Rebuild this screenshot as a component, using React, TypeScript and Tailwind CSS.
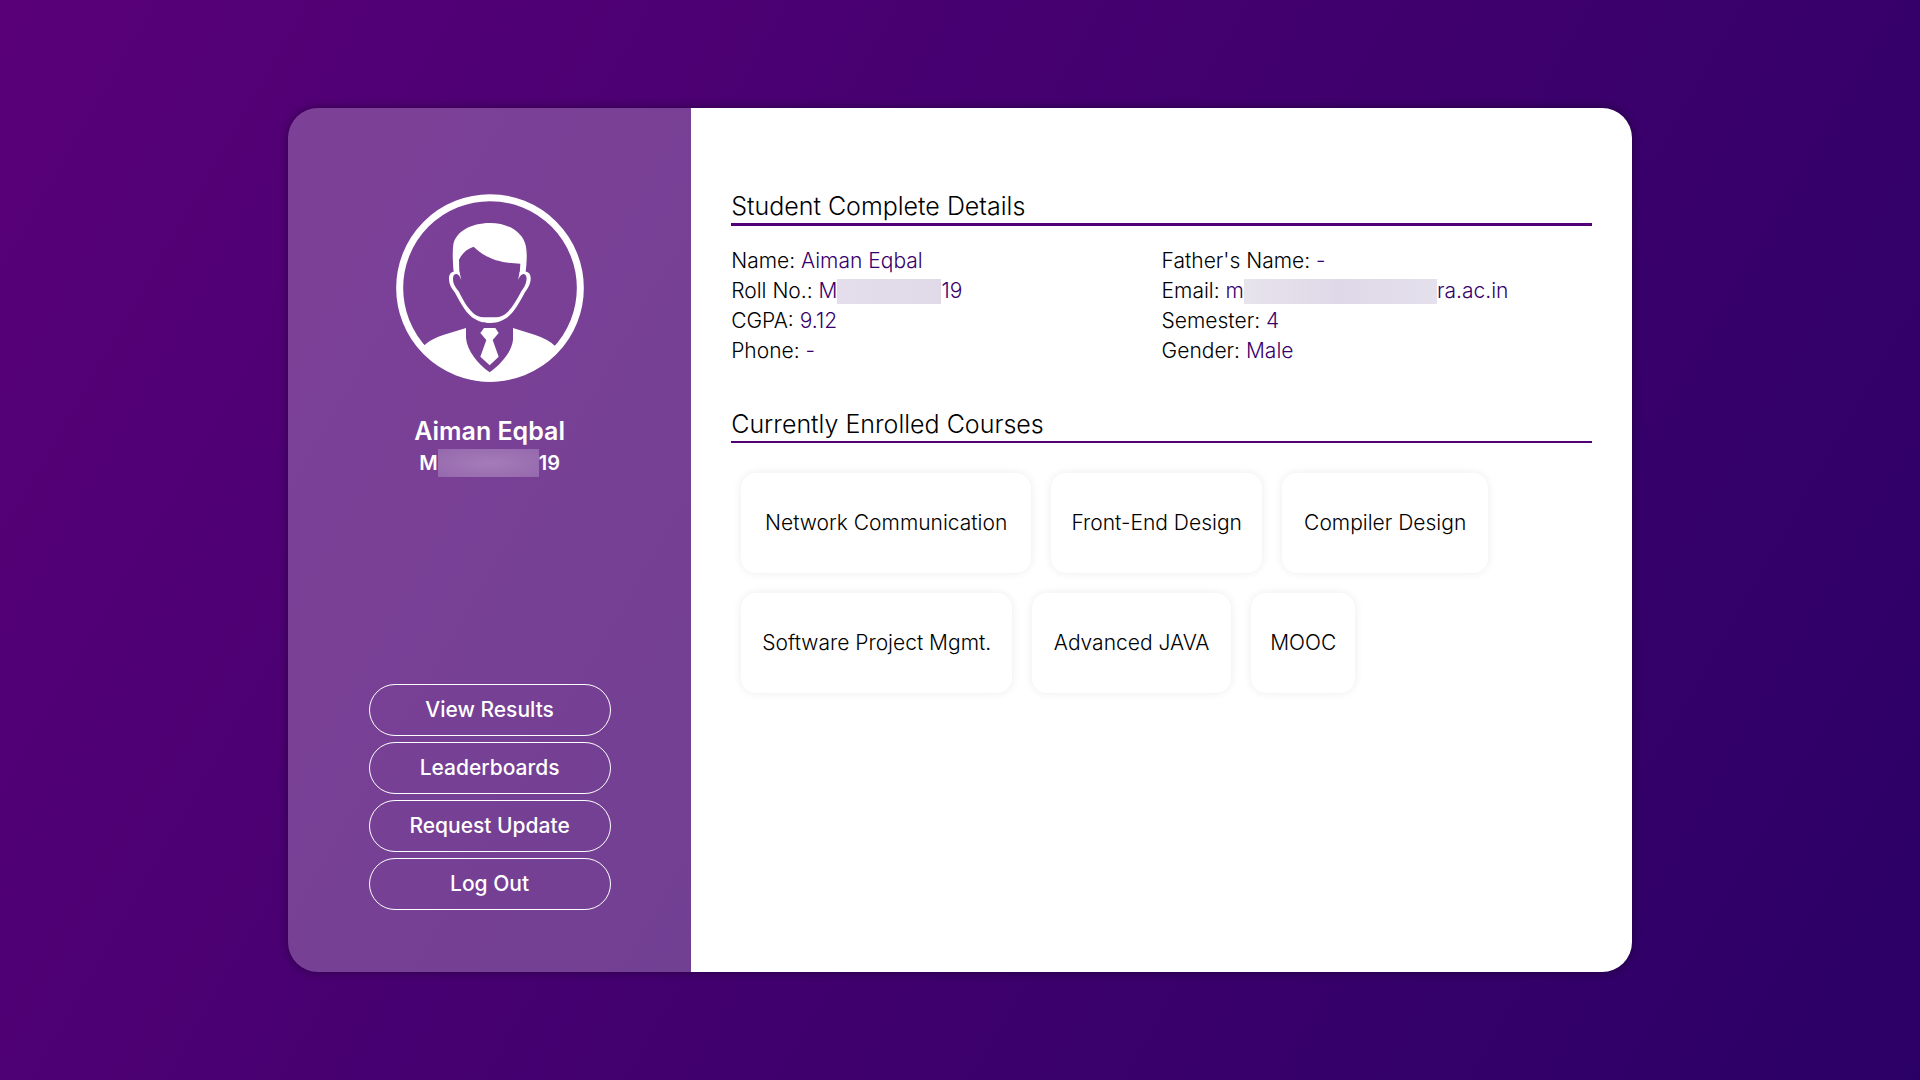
import type { ReactNode } from "react";

const actions = ["View Results", "Leaderboards", "Request Update", "Log Out"];

const courses = [
  { title: "Network Communication", width: "min-w-[290px]" },
  { title: "Front-End Design", width: "min-w-[211px]" },
  { title: "Compiler Design", width: "min-w-[206px]" },
  { title: "Software Project Mgmt.", width: "min-w-[271px]" },
  { title: "Advanced JAVA", width: "min-w-[199px]" },
  { title: "MOOC", width: "min-w-[104px]" },
];

function Avatar() {
  return (
    <svg viewBox="48 42 564 564" className="size-[188px]" role="img" aria-label="Student avatar">
      <circle cx="330" cy="324" r="271" fill="none" stroke="#fff" strokeWidth="21" />
      {/* hair */}
      <path
        fill="#fff"
        d="M221 276 C218 245 217 215 220 193 C228 155 272 129 330 129 C386 129 430 157 438 200 C442 225 440 250 437 276 L419 282 L421 251 C370 250 322 240 281 200 C258 207 245 223 237 239 L238 282 Z"
      />
      {/* ears and jaw */}
      <path
        fill="#fff"
        d="M221 275 C211 276 206 286 207 299 C208 312 213 324 225 338 C244 372 258 402 286 418 C302 428 314 429 330 429 C346 429 358 427 373 418 C400 402 417 370 434 338 C446 322 451 312 452 298 C453 284 447 275 436 275 L419 276 L414 300 C418 290 424 282 431 282 C439 283 441 292 439 303 C437 317 430 324 424 334 C407 366 392 392 370 406 C360 413 346 412 330 412 C314 412 299 413 288 406 C266 391 251 364 236 334 C229 324 220 315 219 299 C218 287 223 281 230 282 C237 284 240 291 244 300 L238 274 Z"
      />
      {/* jacket */}
      <path
        fill="#fff"
        d="M258 444 L258 474 C261 512 294 552 329 577 C363 552 396 514 399 479 L399 444 L466 465 C490 473 511 484 526 499 C480 562 410 605 330 605 C250 605 180 562 132 497 C149 480 168 472 192 464 Z"
      />
      {/* tie */}
      <path fill="#fff" d="M312 444 H346 L356 459 L338 480 L356 530 L329 556 L301 530 L319 480 L301 459 Z" />
    </svg>
  );
}

function Detail({ label, children }: { label: string; children: ReactNode }) {
  return (
    <div className="flex h-[30px] items-center whitespace-pre">
      <dt>{label} </dt>
      <dd className="flex items-center text-[#38006b]">{children}</dd>
    </div>
  );
}

export default function App() {
  return (
    <div className="flex min-h-screen items-center justify-center bg-[linear-gradient(120deg,#590078,#2b0066)] font-['Inter',sans-serif]">
      <main className="flex min-h-[80vh] w-[70%] overflow-hidden rounded-[30px] shadow-[0_0_10px_rgba(0,0,0,0.4)]">
        <aside className="flex w-[30%] flex-col items-center justify-between bg-white/25 pt-[86px] pb-[62px] text-white">
          <div className="flex flex-col items-center">
            <Avatar />
            <h1 className="mt-8 text-[25px] leading-[34px] font-semibold">Aiman Eqbal</h1>
            <p className="flex h-[30px] items-center text-xl font-semibold">
              M
              <span className="h-7 w-[101px] bg-[radial-gradient(ellipse_at_center,#a57cb8,#9568ad)]" />
              19
            </p>
          </div>
          <nav className="flex w-[60%] flex-col gap-1.5">
            {actions.map((a) => (
              <button key={a} type="button" className="h-[52px] rounded-full border border-white text-[21px] font-medium">
                {a}
              </button>
            ))}
          </nav>
        </aside>

        <div className="flex-1 bg-white px-10 pt-[81px] text-black">
          <section>
            <h2 className="border-b-[3px] border-[#520077] text-[25px] leading-[34px] font-light">
              Student Complete Details
            </h2>
            <dl className="mt-5 grid grid-flow-col grid-cols-2 grid-rows-4 text-[21px] font-light">
              <Detail label="Name:">Aiman Eqbal</Detail>
              <Detail label="Roll No.:">
                M
                <span className="h-[25px] w-[104px] bg-[linear-gradient(90deg,#e4deec,#e0d9e8)]" />
                19
              </Detail>
              <Detail label="CGPA:">9.12</Detail>
              <Detail label="Phone:">-</Detail>
              <Detail label="Father's Name:">-</Detail>
              <Detail label="Email:">
                m
                <span className="h-[25px] w-[193px] bg-[linear-gradient(90deg,#e7e4ec,#dfd8e8,#e4e0ec)]" />
                ra.ac.in
              </Detail>
              <Detail label="Semester:">4</Detail>
              <Detail label="Gender:">Male</Detail>
            </dl>
          </section>

          <section className="mt-[41px]">
            <h2 className="border-b-2 border-[#520077] text-[25px] leading-[34px] font-light">
              Currently Enrolled Courses
            </h2>
            <ul className="mt-5 flex flex-wrap gap-5 p-2.5 text-[21px] font-light">
              {courses.map((c) => (
                <li
                  key={c.title}
                  className={`flex h-[100px] items-center justify-center rounded-[15px] px-2 shadow-[0_0_10px_rgba(0,0,0,0.08)] ${c.width}`}
                >
                  {c.title}
                </li>
              ))}
            </ul>
          </section>
        </div>
      </main>
    </div>
  );
}
